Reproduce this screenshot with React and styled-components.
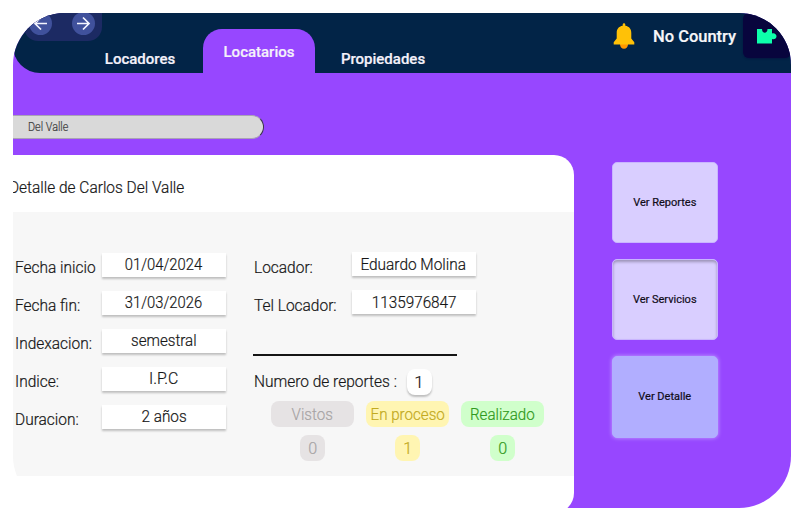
import React from "react";
import styled, { createGlobalStyle } from "styled-components";

const Global = createGlobalStyle`
  *, *::before, *::after { box-sizing: border-box; }
  body { margin: 0; background: #fff; font-family: Roboto, "Liberation Sans", sans-serif; color: #161616; }
`;

const Frame = styled.div`
  width: 778px;
  height: 495px;
  margin: 13px;
  border-radius: 52px;
  overflow: hidden;
  background:
    linear-gradient(#9747ff, #9747ff) 0 0 / 100% 400px no-repeat,
    linear-gradient(#9747ff, #9747ff) 100% 0 / 600px 100% no-repeat;
`;

const Header = styled.header`
  display: flex;
  align-items: flex-start;
  height: 60px;
  background: #022447;
  border-bottom-left-radius: 27px;
`;

const History = styled.div`
  display: flex;
  justify-content: space-between;
  width: 78px;
  height: 28px;
  margin-left: 11px;
  padding: 0 7px 0 5px;
  background: #1c2a63;
  border-radius: 0 0 14px 14px;
`;

const RoundButton = styled.button`
  display: grid;
  place-items: center;
  width: 23px;
  height: 23px;
  margin-top: -1px;
  padding: 0;
  border: 0;
  border-radius: 50%;
  background: #40519c;
`;

const Tab = styled.a`
  flex: none;
  width: ${(p) => p.$width}px;
  height: ${(p) => (p.$active ? 45 : 29)}px;
  margin-top: ${(p) => (p.$active ? 15.5 : 31)}px;
  margin-right: ${(p) => p.$after || 0}px;
  padding-top: ${(p) => (p.$active ? 13 : 5)}px;
  border-radius: 19px 19px 0 0;
  background: ${(p) => (p.$active ? "#9747ff" : "transparent")};
  color: #f4f1fa;
  font-size: 15px;
  font-weight: 500;
  -webkit-text-stroke: 0.2px currentColor;
  line-height: 20px;
  text-align: center;
`;

const Account = styled.div`
  display: flex;
  align-items: flex-start;
  margin-left: auto;
`;

const AccountName = styled.span`
  width: 84px;
  margin: 13px 6px 0 18.5px;
  color: #f7f7f9;
  font-size: 16px;
  font-weight: 500;
  -webkit-text-stroke: 0.2px currentColor;
  line-height: 21px;
  white-space: nowrap;
`;

const Avatar = styled.div`
  width: 48px;
  height: 45px;
  padding: 14px 0 0 14px;
  border-radius: 6px;
  background: #08053d;
  box-shadow: 0 1px 2px #08053d66;
`;

const Bell = styled.svg`
  display: block;
  margin-top: 10px;
`;

const Search = styled.div`
  width: 251px;
  height: 24px;
  margin-top: 41.5px;
  padding-left: 14.5px;
  border: 1px solid;
  border-color: #aaa3b5 #39334a #aaa3b5;
  border-left: 0;
  border-radius: 0 12px 12px 0;
  background: #d9d9d9;
  color: #404040;
  font-size: 12px;
  font-weight: 300;
  -webkit-text-stroke: 0.2px currentColor;
  line-height: 22px;
`;

const Main = styled.main`
  display: flex;
  align-items: flex-start;
  gap: 37.5px;
  margin-top: 16.5px;
`;

const Card = styled.section`
  width: 561px;
  height: 358px;
  border-radius: 0 20px 20px 0;
  background: #fff;
`;

const Title = styled.h1`
  height: 57px;
  margin: 0 0 0 -4px;
  padding-top: 22px;
  font-size: 16.5px;
  font-weight: 300;
  -webkit-text-stroke: 0.2px currentColor;
  line-height: 22px;
`;

const Panel = styled.div`
  display: flex;
  width: 561.4px;
  height: 264px;
  padding-top: 40px;
  background: #f7f7f7;
  -webkit-text-stroke: 0.2px currentColor;
`;

const Fields = styled.div`
  display: flex;
  flex-direction: column;
  width: ${(p) => p.$width}px;
  padding-left: ${(p) => p.$indent}px;
`;

const Row = styled.div`
  display: flex;
  height: 38px;
`;

const Label = styled.span`
  width: ${(p) => p.$width}px;
  padding-top: ${(p) => (p.$top === undefined ? 5 : p.$top)}px;
  padding-left: 0.5px;
  font-size: 16.5px;
  font-weight: 300;
  line-height: 22px;
  white-space: nowrap;
`;

const Value = styled.span`
  width: 124px;
  height: 24px;
  margin-top: ${(p) => p.$top}px;
  background: #fff;
  box-shadow: 0 2px 2px #0000003a;
  font-size: 17px;
  font-weight: 300;
  line-height: ${(p) => p.$line}px;
  text-align: center;
  white-space: nowrap;
`;

const Text = styled.span`
  display: inline-block;
  transform: scaleX(${(p) => p.$x || 1});
  transform-origin: ${(p) => p.$origin || "left"} center;
  white-space: nowrap;
`;

const Rule = styled.hr`
  width: 204px;
  height: 1.5px;
  margin: 26px 0 0;
  border: 0;
  background: #151515;
`;

const Total = styled.div`
  display: flex;
  align-items: flex-start;
  height: 45px;
  padding-top: 13px;
`;

const Count = styled.span`
  width: 25px;
  height: 26px;
  border-radius: 8px;
  background: ${(p) => p.$bg || "#fff"};
  color: ${(p) => p.$color || "#1a1a1a"};
  box-shadow: ${(p) => (p.$raised ? "0 2px 2px #0000003a" : "none")};
  font-size: 17px;
  font-weight: 300;
  line-height: 26px;
  text-align: center;
`;

const Statuses = styled.div`
  display: flex;
  gap: 12px;
  padding-left: 18px;
`;

const Status = styled.div`
  display: flex;
  flex-direction: column;
  align-items: center;
  gap: 8.5px;
`;

const Pill = styled.span`
  width: 83px;
  height: 26px;
  border-radius: 8px;
  background: ${(p) => p.$bg};
  color: ${(p) => p.$color};
  font-size: 17px;
  font-weight: 300;
  line-height: 26px;
  text-align: center;
`;

const Actions = styled.nav`
  display: flex;
  flex-direction: column;
  gap: 16.5px;
  padding-top: 6.5px;
`;

const Action = styled.button`
  width: 106.5px;
  height: ${(p) => (p.$active ? 82 : 81)}px;
  margin-top: ${(p) => (p.$active ? -1 : 0)}px;
  padding: 0;
  border: 1px solid ${(p) => (p.$active ? "#b1aeff" : "#c9b5ff")};
  border-radius: 5px;
  background: ${(p) => (p.$active ? "#b1aeff" : "#d9ceff")};
  box-shadow: ${(p) =>
    p.$active ? "0 0 4px #d9ceffaa" : p.$inset ? "inset 0 2px 3px #00000048" : "none"};
  color: #100c18;
  font: 400 11px Roboto, sans-serif;
  -webkit-text-stroke: 0.2px currentColor;
`;

const contract = [
  ["Fecha inicio", "01/04/2024", 0.868],
  ["Fecha fin:", "31/03/2026", 0.868],
  ["Indexacion:", "semestral", 0.89],
  ["Indice:", "I.P.C", 0.93],
  ["Duracion:", "2 años", 0.9],
];

const landlord = [
  ["Locador:", "Eduardo Molina", 0.907],
  ["Tel Locador:", "1135976847", 0.9],
];

const statuses = [
  { name: "Vistos", count: 0, bg: "#e6e3e4", color: "#a7a4a5" },
  { name: "En proceso", count: 1, bg: "#fff5b2", color: "#c2aa20" },
  { name: "Realizado", count: 0, bg: "#d0ffcb", color: "#309a20" },
];

function Arrow({ back }) {
  return (
    <svg width="15" height="15" viewBox="0 0 15 15" fill="none" stroke="#f5f6ff" strokeWidth="1.7">
      <path d={back ? "M14 7.5H2M8 1.5L2 7.5L8 13.5" : "M1 7.5H13M7 1.5L13 7.5L7 13.5"} />
    </svg>
  );
}

function FieldRow({ label, value, stretch, labelWidth, top, line = 23 }) {
  return (
    <Row>
      <Label $width={labelWidth}><Text $x={0.938}>{label}</Text></Label>
      <Value $top={top} $line={line}><Text $x={stretch} $origin="center">{value}</Text></Value>
    </Row>
  );
}

export default function App() {
  return (
    <>
      <Global />
      <Frame>
        <Header>
          <History>
            <RoundButton aria-label="Atrás"><Arrow back /></RoundButton>
            <RoundButton aria-label="Adelante"><Arrow /></RoundButton>
          </History>
          <Tab $width={76} $after={25}>Locadores</Tab>
          <Tab $width={112} $active>Locatarios</Tab>
          <Tab $width={136}>Propiedades</Tab>
          <Account>
            <Bell width="22" height="27" viewBox="0 0 22 27">
              <path d="M7 21H15C15 24 13.4 25.7 11 25.7S7 24 7 21Z" fill="#ff9800" />
              <path d="M9.7 1.5a1.3 1.3 0 0 1 2.6 0V2.8C16.5 3.5 18.3 6.2 18.3 10V15.6L21.3 19.2V21.5H.7V19.2L3.7 15.6V10C3.7 6.2 5.5 3.5 9.7 2.8Z" fill="#ffc107" />
            </Bell>
            <AccountName><Text $x={1.03}>No Country</Text></AccountName>
            <Avatar>
              <svg width="20" height="18" viewBox="0 0 20 18">
                <path d="M0 2H5C5 7 10.5 7 10.5 2H15V6.5C17 5.5 19.5 7 19.5 9.3S17 13 15 12V16.5H0Z" fill="#0dffab" />
              </svg>
            </Avatar>
          </Account>
        </Header>
        <Search><Text $x={0.9}>Del Valle</Text></Search>
        <Main>
          <Card>
            <Title><Text $x={0.936}>Detalle de Carlos Del Valle</Text></Title>
            <Panel>
              <Fields $width={240} $indent={1}>
                {contract.map(([label, value, stretch]) => (
                  <FieldRow key={label} label={label} value={value} stretch={stretch} labelWidth={87.7} top={1} />
                ))}
              </Fields>
              <Fields $width={320} $indent={0}>
                {landlord.map(([label, value, stretch]) => (
                  <FieldRow key={label} label={label} value={value} stretch={stretch} labelWidth={98.7} top={0} line={24} />
                ))}
                <Rule />
                <Total>
                  <Label $width={153.5} $top={2}><Text $x={0.938}>Numero de reportes :</Text></Label>
                  <Count $raised>1</Count>
                </Total>
                <Statuses>
                  {statuses.map((s) => (
                    <Status key={s.name}>
                      <Pill $bg={s.bg} $color={s.color}><Text $x={0.89} $origin="center">{s.name}</Text></Pill>
                      <Count $bg={s.bg} $color={s.color}><Text $x={0.95} $origin="center">{s.count}</Text></Count>
                    </Status>
                  ))}
                </Statuses>
              </Fields>
            </Panel>
          </Card>
          <Actions>
            <Action>Ver Reportes</Action>
            <Action $inset>Ver Servicios</Action>
            <Action $active>Ver Detalle</Action>
          </Actions>
        </Main>
      </Frame>
    </>
  );
}
